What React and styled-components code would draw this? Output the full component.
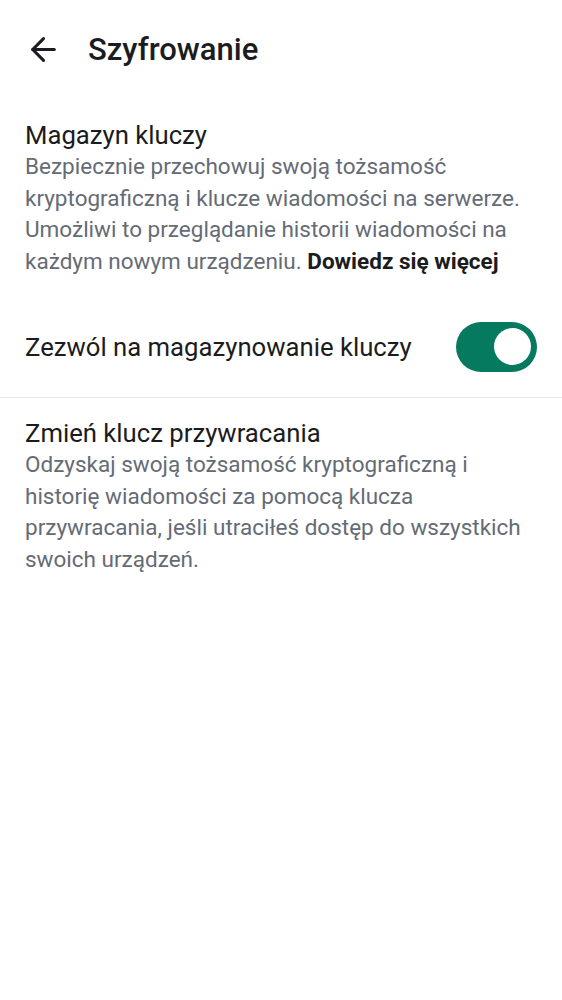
import React, { useState } from "react";
import styled, { createGlobalStyle } from "styled-components";

const Global = createGlobalStyle`
  html, body { margin: 0; padding: 0; background: #ffffff; }
  body { font-family: Roboto, "Noto Sans", sans-serif; -webkit-font-smoothing: antialiased; }
  * { box-sizing: border-box; }
`;

const Screen = styled.div`
  width: 562px;
  min-height: 1000px;
  background: #ffffff;
  display: flex;
  flex-direction: column;
`;

const Header = styled.header`
  height: 98px;
  display: flex;
  align-items: center;
  padding: 0 0 0 25px;
  gap: 26px;
`;

const BackButton = styled.button`
  width: 37px;
  height: 37px;
  padding: 0;
  border: none;
  background: none;
  display: flex;
  align-items: center;
  justify-content: center;
  color: #1b1c20;
  cursor: pointer;
`;

const Title = styled.h1`
  margin: 0;
  font-size: 31px;
  font-weight: 500;
  color: #1b1c20;
  letter-spacing: 0;
`;

const Section = styled.section`
  padding: ${(p) => p.$pad || "21px 25px 20px"};
  display: flex;
  flex-direction: column;
`;

const ItemTitle = styled.div`
  font-size: 25.7px;
  line-height: 32px;
  color: #1b1c20;
`;

const ItemDesc = styled.p`
  margin: 0;
  font-size: 22.5px;
  line-height: 31.7px;
  color: #656b75;
`;

const Link = styled.a`
  font-weight: 700;
  color: #1b1c20;
  text-decoration: none;
`;

const SwitchRow = styled.div`
  display: flex;
  align-items: center;
  justify-content: space-between;
  padding: 24px 25px 25px 25px;
  border-bottom: 1px solid #e9e9eb;
`;

const SwitchLabel = styled.span`
  font-size: 25.7px;
  color: #1b1c20;
`;

const Track = styled.button`
  width: 81px;
  height: 50px;
  border-radius: 25px;
  border: none;
  padding: 0 6px;
  background: ${(p) => (p.$on ? "#067a5f" : "#c4c7cc")};
  display: flex;
  align-items: center;
  justify-content: ${(p) => (p.$on ? "flex-end" : "flex-start")};
  cursor: pointer;
  flex-shrink: 0;
`;

const Thumb = styled.span`
  width: 37px;
  height: 37px;
  border-radius: 50%;
  background: #ffffff;
`;

function BackArrow() {
  return (
    <svg width="37" height="37" viewBox="0 0 24 24" fill="none" stroke="currentColor" strokeWidth="2" strokeLinecap="round" strokeLinejoin="round">
      <path d="M19 12H5" />
      <path d="M12 19l-7-7 7-7" />
    </svg>
  );
}

export default function App() {
  const [on, setOn] = useState(true);
  return (
    <>
      <Global />
      <Screen>
        <Header>
          <BackButton aria-label="Wstecz">
            <BackArrow />
          </BackButton>
          <Title>Szyfrowanie</Title>
        </Header>
        <Section>
          <ItemTitle>Magazyn kluczy</ItemTitle>
          <ItemDesc>
            Bezpiecznie przechowuj swoją tożsamość kryptograficzną i klucze wiadomości na serwerze. Umożliwi to przeglądanie historii wiadomości na każdym nowym urządzeniu.{" "}
            <Link href="#">Dowiedz się więcej</Link>
          </ItemDesc>
        </Section>
        <SwitchRow>
          <SwitchLabel>Zezwól na magazynowanie kluczy</SwitchLabel>
          <Track $on={on} onClick={() => setOn(!on)} aria-pressed={on}>
            <Thumb />
          </Track>
        </SwitchRow>
        <Section $pad="19px 25px 20px">
          <ItemTitle>Zmień klucz przywracania</ItemTitle>
          <ItemDesc>
            Odzyskaj swoją tożsamość kryptograficzną i historię wiadomości za pomocą klucza przywracania, jeśli utraciłeś dostęp do wszystkich swoich urządzeń.
          </ItemDesc>
        </Section>
      </Screen>
    </>
  );
}
